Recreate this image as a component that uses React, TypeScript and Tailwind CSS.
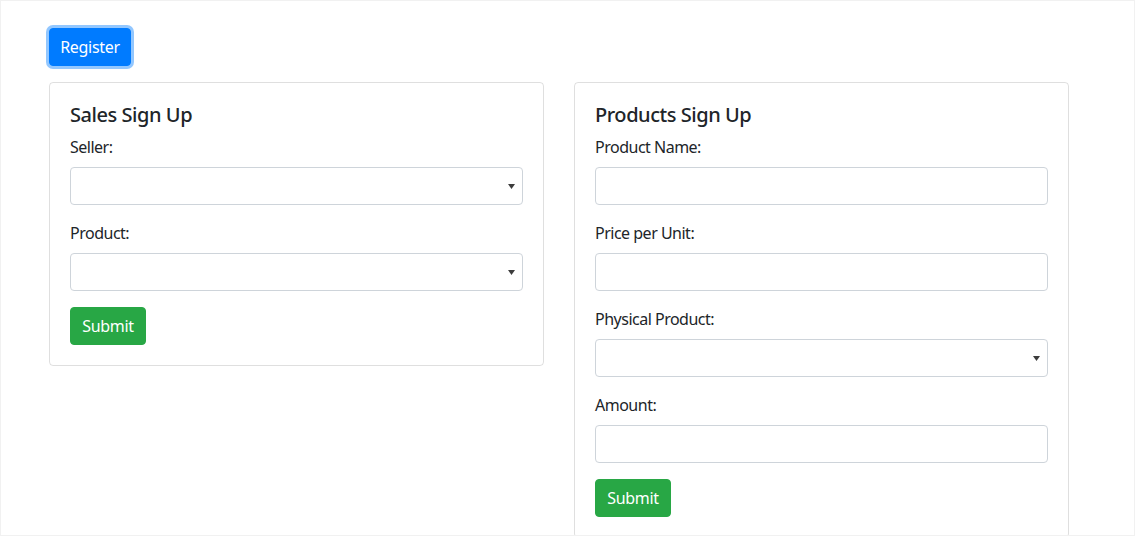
import React from "react";

const font = { fontFamily: '"Noto Sans", "Liberation Sans", sans-serif' };

function Label({ children }: { children: React.ReactNode }) {
  return <label className="block text-[16px] leading-[24px] mb-2 text-[#212529] tracking-[-0.5px]">{children}</label>;
}

function Input() {
  return <div className="h-[38px] w-full rounded-[4px] border border-[#ced4da] bg-white" />;
}

function Select() {
  return (
    <div className="h-[38px] w-full rounded-[4px] border border-[#ced4da] bg-white flex items-center justify-end pr-[7px]">
      <svg width="7" height="5" viewBox="0 0 7 5">
        <polygon points="0,0 7,0 3.5,5" fill="#3c3c3c" />
      </svg>
    </div>
  );
}

function Group({ label, children }: { label: string; children: React.ReactNode }) {
  return (
    <div className="mb-4">
      <Label>{label}</Label>
      {children}
    </div>
  );
}

function SubmitBtn() {
  return (
    <button className="h-[38px] w-[76px] rounded-[4px] bg-[#28a745] text-white text-[16px] leading-[24px] border border-[#28a745] tracking-[-0.3px]">
      Submit
    </button>
  );
}

export default function App() {
  return (
    <div className="w-[1135px] h-[536px] bg-white border border-[#f1f1f1] text-[#212529] overflow-hidden" style={font}>
      <div className="pl-[48px] pt-[27px]">
        <button className="h-[38px] w-[82px] rounded-[4px] bg-[#007bff] text-white text-[16px] leading-[24px] border border-[#007bff] tracking-[-0.3px] shadow-[0_0_0_3px_rgba(38,143,255,0.5)]">
          Register
        </button>
        <div className="mt-4 flex items-start gap-[30px]">
          <div className="w-[495px] rounded-[4px] border border-[rgba(0,0,0,0.125)] p-5">
            <h5 className="text-[20px] leading-[24px] font-medium mb-2 tracking-[-0.45px]">Sales Sign Up</h5>
            <Group label="Seller:"><Select /></Group>
            <Group label="Product:"><Select /></Group>
            <SubmitBtn />
          </div>
          <div className="w-[495px] rounded-[4px] border border-[rgba(0,0,0,0.125)] p-5">
            <h5 className="text-[20px] leading-[24px] font-medium mb-2 tracking-[-0.45px]">Products Sign Up</h5>
            <Group label="Product Name:"><Input /></Group>
            <Group label="Price per Unit:"><Input /></Group>
            <Group label="Physical Product:"><Select /></Group>
            <Group label="Amount:"><Input /></Group>
            <SubmitBtn />
          </div>
        </div>
      </div>
    </div>
  );
}
